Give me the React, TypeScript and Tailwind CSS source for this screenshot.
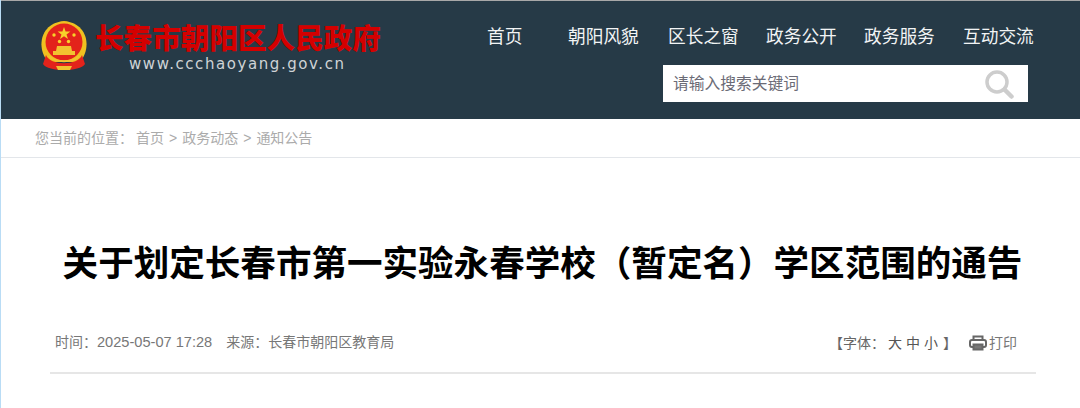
import React from 'react';

const sans = "font-['Liberation_Sans','Noto_Sans_CJK_SC',sans-serif]";

const navItems = [
  { label: '首页', cls: 'w-[81px]' },
  { label: '朝阳风貌', cls: 'w-[100px]' },
  { label: '区长之窗', cls: 'w-[98px]' },
  { label: '政务公开', cls: 'w-[98px]' },
  { label: '政务服务', cls: 'w-[99px]' },
  { label: '互动交流', cls: 'w-[72px]' },
];

const colon = '\uFF1A';
const title = '关于划定长春市第一实验永春学校\uFF08暂定名\uFF09学区范围的通告';

const Emblem = () => (
  <svg width="48" height="52" viewBox="0 0 48 52" className="shrink-0">
    <path d="M8 42 C-4 28 0 3 24 1 C48 3 52 28 40 42 Z" fill="#f0c020" />
    <circle cx="24" cy="22" r="18.5" fill="#e3231b" />
    <polygon points="24,7 25.6,11.6 30.4,11.6 26.5,14.4 28,19 24,16.2 20,19 21.5,14.4 17.6,11.6 22.4,11.6" fill="#f7d22a" />
    <circle cx="14" cy="15" r="1.7" fill="#f7d22a" />
    <circle cx="34" cy="15" r="1.7" fill="#f7d22a" />
    <circle cx="19.5" cy="21.5" r="1.7" fill="#f7d22a" />
    <circle cx="28.5" cy="21.5" r="1.7" fill="#f7d22a" />
    <path d="M17 26 H31 L32 31 H35 V35 H13 V31 H16 Z" fill="#f2c230" />
    <path d="M6 35 C10 46 38 46 42 35 L45 44 C40 52 8 52 3 44 Z" fill="#e3231b" />
    <path d="M9 36 C14 43 34 43 39 36" fill="none" stroke="#f2c230" strokeWidth="2" />
    <path d="M16 46 H32 L30 50 H18 Z" fill="#f2c230" />
  </svg>
);

export default function App() {
  return (
    <div className={`w-[1080px] h-[408px] overflow-hidden bg-white border-l border-l-[#b9dcf5] ${sans}`}>
      <header className="-ml-px h-[119px] bg-[#263a47] border-t border-t-[#a8a8a8] flex">
        <div className="w-[462px] pl-[40px] pt-[19px] flex gap-[7px] shrink-0">
          <Emblem />
          <div className="flex flex-col">
            <div className="mt-[2px] text-[28.6px] leading-[34px] font-black text-[#d40000] whitespace-nowrap">长春市朝阳区人民政府</div>
            <div className="pl-[34px] -mt-[1px] text-[15px] leading-[18px] tracking-[1.57px] text-[#cfd3d6] font-['DejaVu_Sans',sans-serif] whitespace-nowrap">www.ccchaoyang.gov.cn</div>
          </div>
        </div>
        <div className="flex-1 pl-[25px]">
          <nav className="flex pt-[23px] h-[64px]">
            {navItems.map((item) => (
              <a key={item.label} className={`${item.cls} text-[17.7px] leading-[26px] text-[#f2f4f5] whitespace-nowrap`}>
                {item.label}
              </a>
            ))}
          </nav>
          <div className="ml-[176px] w-[365px] h-[37px] bg-white flex items-center justify-between pl-[10px] pr-[14px]">
            <span className="text-[15.75px] text-[#6b6b76]">请输入搜索关键词</span>
            <svg width="30" height="30" viewBox="0 0 30 30" fill="none" stroke="#cdcdcd">
              <circle cx="13" cy="13" r="10" strokeWidth="3.5" />
              <path d="M20.5 20.5 L27.5 27.5" strokeWidth="4.5" strokeLinecap="round" />
            </svg>
          </div>
        </div>
      </header>

      <div className="h-[39px] border-b border-b-[#e3e6ea] pl-[34px] flex items-center text-[14px] text-[#ababab] whitespace-nowrap">
        <span className="w-[101px]">您当前的位置{colon}</span>
        <span className="flex gap-[5px]">
          <span>首页</span>
          <span>&gt;</span>
          <span>政务动态</span>
          <span>&gt;</span>
          <span>通知公告</span>
        </span>
      </div>

      <h1 className="mt-[79px] pl-[4px] text-center text-[35.55px] leading-[54px] font-bold text-black whitespace-nowrap">
        {title}
      </h1>

      <div className="mx-[49px] mt-[30px] w-[986px] h-[53px] border-b-2 border-b-[#e6e6e6] pb-[7px] flex items-center justify-between text-[14px] text-[#777777] whitespace-nowrap">
        <div className="pl-[5px] flex gap-[14px]">
          <span>时间{colon}<span className="text-[14.6px]">2025-05-07 17:28</span></span>
          <span>来源{colon}长春市朝阳区教育局</span>
        </div>
        <div className="flex items-center pr-[19px]">
          <span className="text-[#666666]">【字体{colon}</span>
          <span className="ml-[3px] flex gap-[4px] text-[#555555]">
            <span>大</span>
            <span>中</span>
            <span>小</span>
          </span>
          <span className="text-[#666666] ml-[5px]">】</span>
          <svg width="18" height="16" viewBox="0 0 18 16" className="ml-[12px]" fill="none" stroke="#666666" strokeWidth="2">
            <path d="M4.5 5 V1.5 H13.5 V5" />
            <rect x="1" y="5" width="16" height="7" rx="2" />
            <rect x="4.5" y="9.5" width="9" height="5" fill="#777777" />
          </svg>
          <span className="ml-[2px]">打印</span>
        </div>
      </div>
    </div>
  );
}
